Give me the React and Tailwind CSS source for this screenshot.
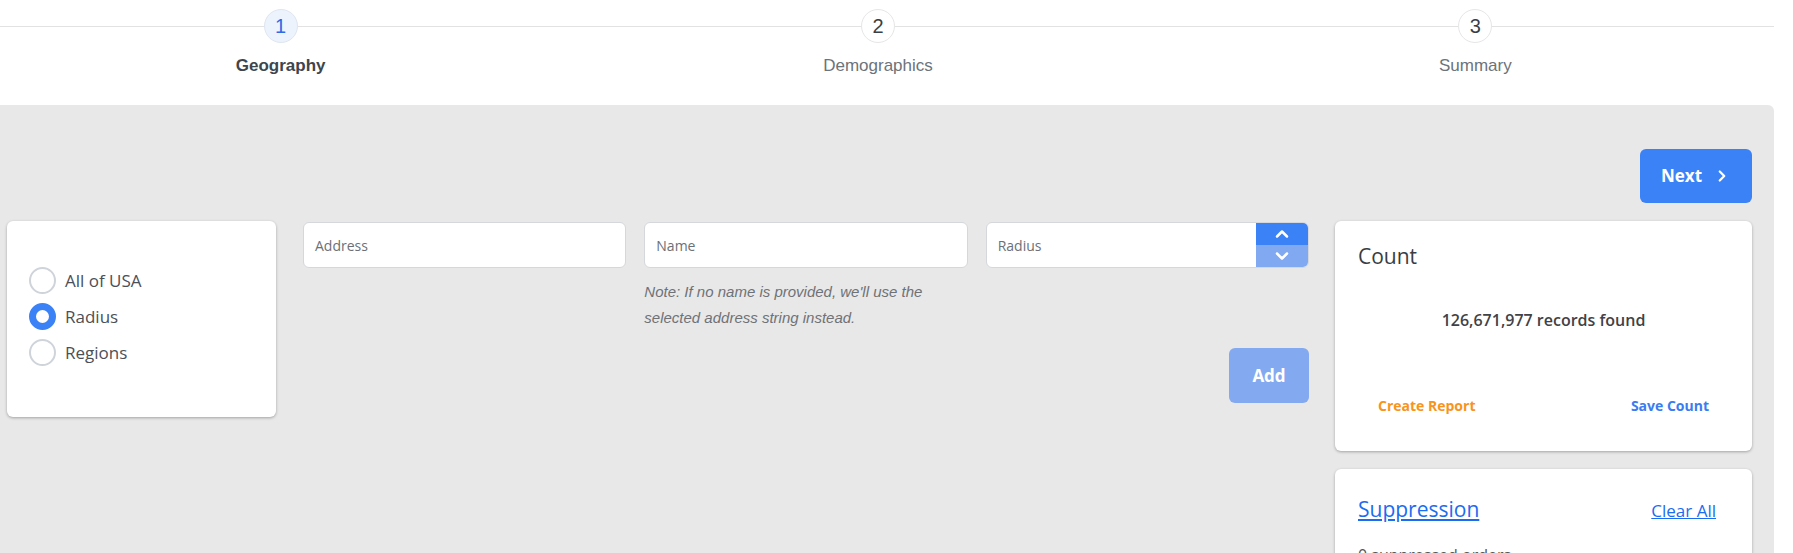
import { ChevronDown, ChevronRight, ChevronUp } from "lucide-react";

const steps = [
  { n: 1, label: "Geography", active: true },
  { n: 2, label: "Demographics" },
  { n: 3, label: "Summary" },
];

function Stepper() {
  return (
    <div className="w-[1774px] h-[105px] overflow-hidden">
      <div className="flex ml-[-18px] pt-[9px]">
        {steps.map((s) => (
          <div key={s.n} className="w-[601px] flex flex-col items-center">
            <div className="w-full flex items-center">
              <div className="flex-1 h-px bg-[#e2e2e2]" />
              <div
                className={
                  s.active
                    ? "w-[34px] h-[34px] rounded-full border border-[#dfe6f0] bg-[#edf3fd] flex items-center justify-center text-[20px] text-[#2d6be4]"
                    : "w-[34px] h-[34px] rounded-full border border-[#e6e6e6] bg-white flex items-center justify-center text-[20px] text-[#3a3f45]"
                }
              >
                {s.n}
              </div>
              <div className="flex-1 h-px bg-[#e2e2e2]" />
            </div>
            <div
              className={
                s.active
                  ? "mt-[13px] text-[17px] leading-[20px] font-bold text-[#40454b]"
                  : "mt-[13px] text-[17px] leading-[20px] text-[#6c737a]"
              }
            >
              {s.label}
            </div>
          </div>
        ))}
      </div>
    </div>
  );
}

function Radio({ label, checked }) {
  return (
    <label className="flex items-center gap-[9px]">
      <span
        className={
          checked
            ? "w-[27px] h-[27px] rounded-full border-[7px] border-[#3b82f6] bg-white"
            : "w-[27px] h-[27px] rounded-full border-2 border-[#cfd4da] bg-white"
        }
      />
      <span className="text-[17px] leading-[24px] text-[#4b5057]">{label}</span>
    </label>
  );
}

function Field({ placeholder }) {
  return (
    <div className="h-[46px] rounded-[6px] border border-[#d4d7db] bg-white flex items-center px-[11px] text-[14px] text-[#6b7078]">
      {placeholder}
    </div>
  );
}

export default function App() {
  return (
    <div
      className="w-[1793px] h-[553px] overflow-hidden bg-white"
      style={{ fontFamily: '"Liberation Sans", Arial, sans-serif' }}
    >
      <Stepper />

      <div className="w-[1774px] h-[448px] bg-[#e8e8e8] rounded-tr-[6px] pt-[44px] font-['Open_Sans',sans-serif]">
        <div className="flex justify-end pr-[22px]">
          <button className="w-[112px] h-[54px] rounded-[6px] bg-[#3b82f6] text-white text-[17px] font-bold flex items-center justify-center gap-[11px]">
            Next
            <ChevronRight size={18} strokeWidth={3} />
          </button>
        </div>

        <div className="flex items-start mt-[18px] pl-[7px] pr-[22px]">
          <div className="w-[269px] h-[196px] rounded-[6px] bg-white shadow-[0_1px_3px_rgba(0,0,0,0.3)] pt-[46px] pl-[22px] flex flex-col gap-[9px]">
            <Radio label="All of USA" />
            <Radio label="Radius" checked />
            <Radio label="Regions" />
          </div>

          <div className="w-[1006px] ml-[27px] pt-px">
            <div className="grid grid-cols-3 gap-[18px] items-start">
              <Field placeholder="Address" />
              <div>
                <Field placeholder="Name" />
                <p className="mt-[11px] pr-[20px] text-[15px] leading-[26px] italic text-[#6e7277] font-['Liberation_Sans',Arial,sans-serif]">
                  Note: If no name is provided, we'll use the selected address
                  string instead.
                </p>
              </div>
              <div className="h-[46px] rounded-[6px] border border-[#d4d7db] bg-white flex overflow-hidden">
                <div className="flex-1 flex items-center px-[11px] text-[14px] text-[#6b7078]">
                  Radius
                </div>
                <div className="w-[52px] flex flex-col">
                  <div className="flex-1 bg-[#3b82f6] flex items-center justify-center text-white">
                    <ChevronUp size={20} strokeWidth={3} />
                  </div>
                  <div className="flex-1 bg-[#80a9f1] flex items-center justify-center text-white">
                    <ChevronDown size={20} strokeWidth={3} />
                  </div>
                </div>
              </div>
            </div>
            <div className="flex justify-end mt-[17px]">
              <button className="w-[80px] h-[55px] rounded-[6px] bg-[#83aaf0] text-white text-[17px] font-bold">
                Add
              </button>
            </div>
          </div>

          <div className="w-[417px] ml-[26px] flex flex-col gap-[18px]">
            <div className="h-[230px] rounded-[6px] bg-white shadow-[0_1px_3px_rgba(0,0,0,0.3)] pt-[21px]">
              <h3 className="px-[23px] text-[21px] leading-[28px] text-[#3a3d41]">Count</h3>
              <p className="mt-[38px] text-center text-[16px] leading-[24px] font-semibold text-[#3f4247]">
                126,671,977 records found
              </p>
              <div className="mt-[64px] px-[43px] flex justify-between text-[14px] leading-[20px] font-bold">
                <span className="text-[#f7941d]">Create Report</span>
                <span className="text-[#3b7cf0]">Save Count</span>
              </div>
            </div>

            <div className="h-[120px] rounded-[6px] bg-white shadow-[0_1px_3px_rgba(0,0,0,0.3)] pt-[26px] px-[23px]">
              <div className="flex items-end justify-between pr-[13px]">
                <a className="text-[21px] leading-[28px] font-medium text-[#1a6cf0] underline">
                  Suppression
                </a>
                <a className="text-[17px] leading-[24px] text-[#1a6cf0] underline">Clear All</a>
              </div>
              <p className="mt-[20px] text-[16px] leading-[24px] text-[#555]">0 suppressed orders</p>
            </div>
          </div>
        </div>
      </div>
    </div>
  );
}
